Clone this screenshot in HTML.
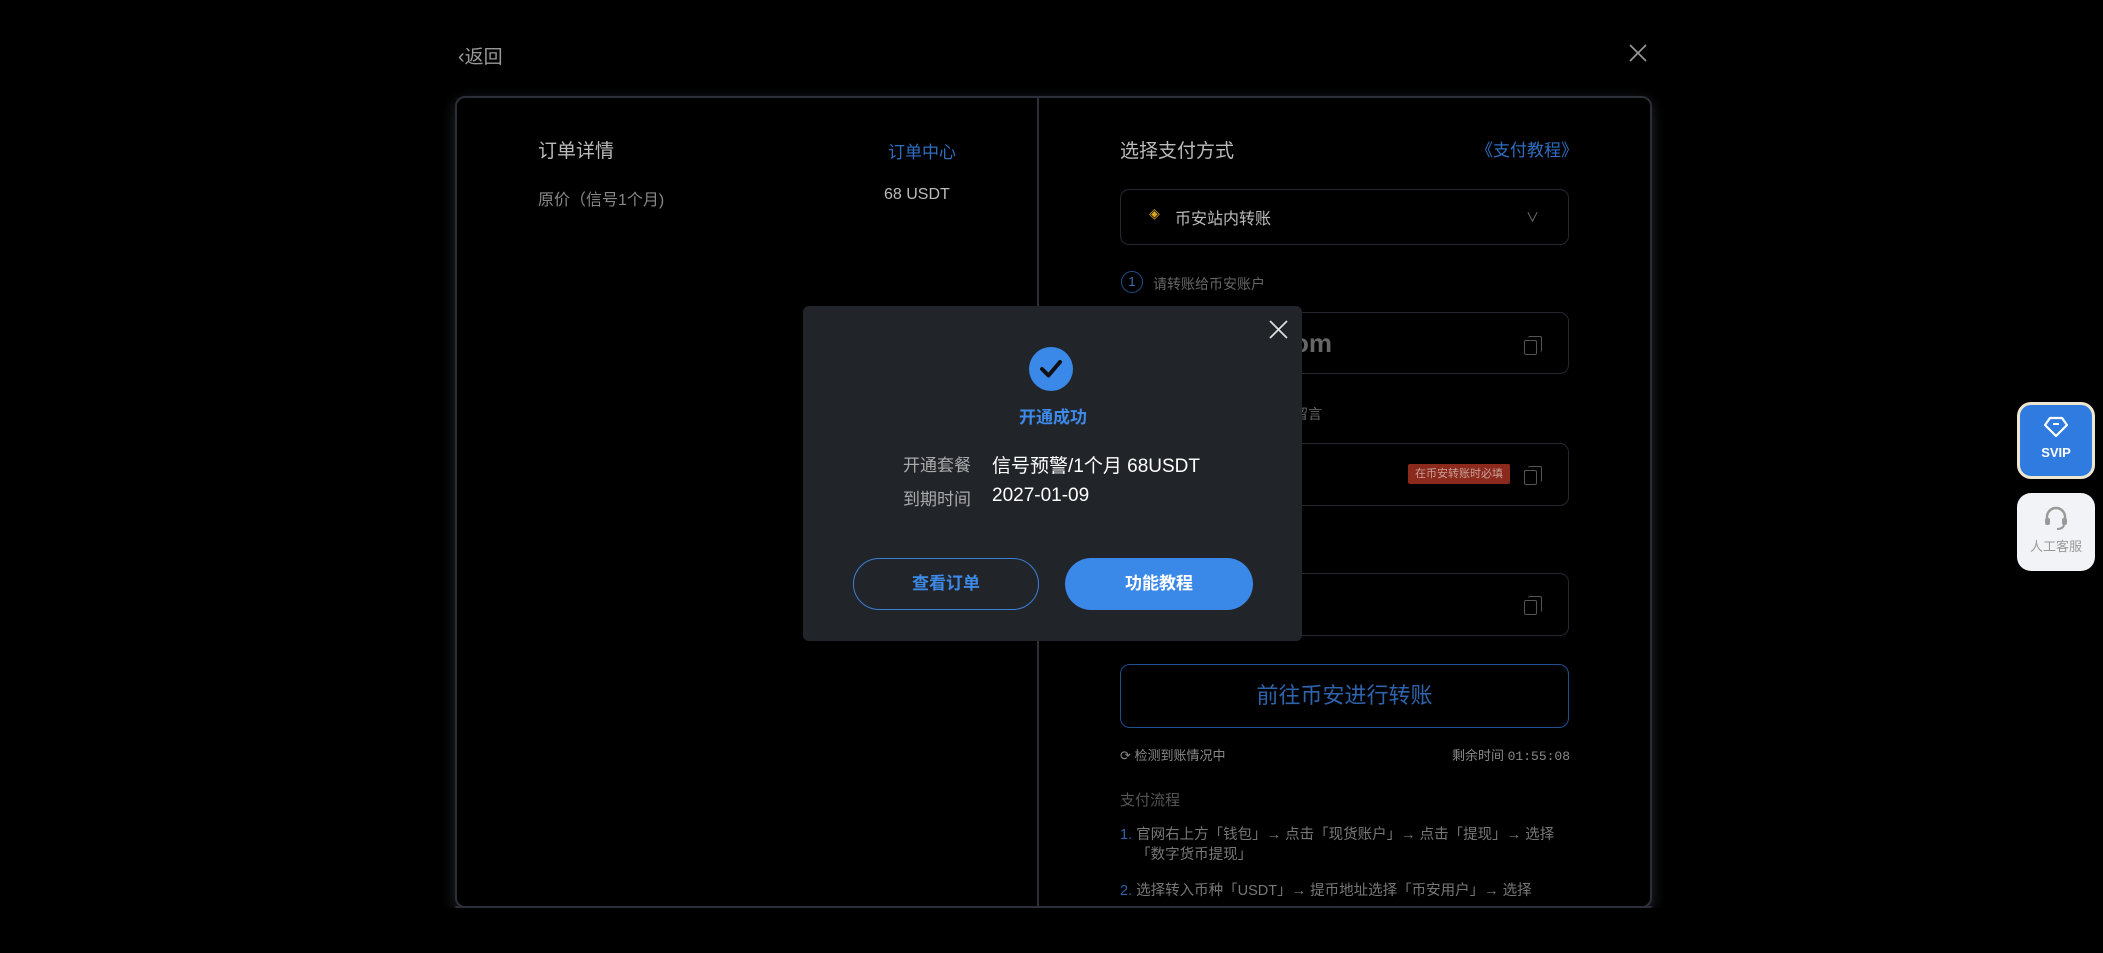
<!DOCTYPE html>
<html><head><meta charset="utf-8"><style>
*{margin:0;padding:0;box-sizing:border-box}
body{width:2103px;height:953px;background:#000;overflow:hidden;position:relative;font-family:"Liberation Sans","Noto Sans CJK SC",sans-serif;color:#ddd}
.a{position:absolute;white-space:nowrap}
.card{position:absolute;left:455px;top:96px;width:1197px;height:812px;border:2px solid #2c2f37;border-radius:10px;background:#000;box-shadow:0 4px 14px #23262e;overflow:hidden}
.box{position:absolute;left:1120px;width:449px;border:1.5px solid #24272d;border-radius:9px}
.copy{position:absolute;width:13px;height:15px;border:1.5px solid #555;border-radius:2px}
.copy:before{content:"";position:absolute;left:3px;top:-5px;width:13px;height:15px;border:1.5px solid #555;border-left:none;border-bottom:none;border-radius:2px}
</style></head><body>
<div class="a" style="left:458px;top:42px;font-size:19px;color:#999"><span style="font-size:20px">‹</span>返回</div>
<svg class="a" style="left:1628px;top:43px" width="20" height="20"><path d="M2 2L18 18M18 2L2 18" stroke="#999" stroke-width="1.6"/></svg>
<div class="card"></div>
<div class="a" style="left:1037px;top:98px;width:1.5px;height:808px;background:#2c2f37"></div>
<div class="a" style="left:538px;top:136px;font-size:19px;color:#bbb">订单详情</div>
<div class="a" style="left:888px;top:138px;font-size:17px;color:#2f6ec0">订单中心</div>
<div class="a" style="left:538px;top:186px;font-size:16px;color:#888">原价（信号1个月)</div>
<div class="a" style="left:884px;top:186px;font-size:16px;color:#bbb">68 USDT</div>
<div class="a" style="left:1120px;top:136px;font-size:19px;color:#bbb">选择支付方式</div>
<div class="a" style="left:1476px;top:136px;font-size:17px;color:#2f6ec0">《支付教程》</div>
<div class="box" style="top:189px;height:56px"></div>
<div class="a" style="left:1149px;top:205px;color:#d8a520;font-size:14px">◈</div>
<div class="a" style="left:1175px;top:205px;font-size:16px;color:#bbb">币安站内转账</div>
<div class="a" style="left:1526px;top:207px;font-size:13px;color:#777">∨</div>
<div class="a" style="left:1121px;top:271px;width:22px;height:22px;border:1.5px solid #1f4f8e;border-radius:50%;font-size:13px;color:#3a6fb8;text-align:center;line-height:19px">1</div>
<div class="a" style="left:1153px;top:274px;font-size:14px;color:#666">请转账给币安账户</div>
<div class="box" style="top:312px;height:62px"></div>
<div class="a" style="left:1032px;top:328px;width:300px;text-align:right;font-size:26px;font-weight:bold;color:#666">support@binance.com</div>
<div class="copy" style="left:1524px;top:340px"></div>
<div class="a" style="left:1022px;top:404px;width:300px;text-align:right;font-size:14px;color:#666">请在转账时填写以下留言</div>
<div class="box" style="top:443px;height:63px"></div>
<div class="a" style="left:1408px;top:464px;width:102px;height:20px;background:#8b2a1c;border-radius:2px;font-size:11px;color:#c9a09a;text-align:center;line-height:20px">在币安转账时必填</div>
<div class="copy" style="left:1524px;top:470px"></div>
<div class="box" style="top:573px;height:63px"></div>
<div class="copy" style="left:1524px;top:600px"></div>
<div class="a" style="left:1120px;top:664px;width:449px;height:64px;border:1.5px solid #1f4f92;border-radius:10px;font-size:22px;color:#2f64ad;text-align:center;line-height:61px">前往币安进行转账</div>
<div class="a" style="left:1120px;top:745px;font-size:13px;color:#888">⟳ 检测到账情况中</div>
<div class="a" style="left:1452px;top:745px;font-size:13px;color:#888">剩余时间 <span style="font-family:'Liberation Mono',monospace">01:55:08</span></div>
<div class="a" style="left:1120px;top:789px;font-size:15px;color:#555">支付流程</div>
<div class="a" style="left:1120px;top:825px;font-size:14.5px;color:#777;line-height:20px"><span style="color:#2f64ad">1.</span> 官网右上方「钱包」→ 点击「现货账户」→ 点击「提现」→ 选择<br>&nbsp;&nbsp;&nbsp;&nbsp;「数字货币提现」</div>
<div class="a" style="left:1120px;top:881px;font-size:14.5px;color:#777;line-height:20px"><span style="color:#2f64ad">2.</span> 选择转入币种「USDT」→ 提币地址选择「币安用户」→ 选择</div>
<div class="a" style="left:0;top:908px;width:2103px;height:45px;background:#000"></div>
<div class="a" style="left:455px;top:906px;width:1197px;height:2px;background:#2c2f37;border-radius:0 0 10px 10px"></div>

<div class="a" style="left:803px;top:306px;width:499px;height:335px;background:#212429;border-radius:6px"></div>
<svg class="a" style="left:1269px;top:320px" width="19" height="19"><path d="M1 1L18 18M18 1L1 18" stroke="#ddd" stroke-width="1.8"/></svg>
<svg class="a" style="left:1029px;top:347px" width="44" height="44"><circle cx="22" cy="22" r="22" fill="#3a88e8"/><path d="M13 22L19.5 28.5L31 15" stroke="#111" stroke-width="4" fill="none" stroke-linecap="round" stroke-linejoin="round"/></svg>
<div class="a" style="left:953px;top:403px;width:200px;text-align:center;font-size:17px;font-weight:bold;color:#3d8ae8">开通成功</div>
<div class="a" style="left:871px;top:451px;width:100px;text-align:right;font-size:17px;color:#aaa">开通套餐</div>
<div class="a" style="left:992px;top:451px;font-size:19px;color:#fff">信号预警/1个月 68USDT</div>
<div class="a" style="left:871px;top:485px;width:100px;text-align:right;font-size:17px;color:#aaa">到期时间</div>
<div class="a" style="left:992px;top:485px;font-size:19px;color:#fff">2027-01-09</div>
<div class="a" style="left:853px;top:558px;width:186px;height:52px;border:1.5px solid #3a80d8;border-radius:26px;text-align:center;line-height:49px;font-size:17px;font-weight:bold;color:#3d8ae8">查看订单</div>
<div class="a" style="left:1065px;top:558px;width:188px;height:52px;background:#3a88e8;border-radius:26px;text-align:center;line-height:52px;font-size:17px;font-weight:bold;color:#fff">功能教程</div>

<div class="a" style="left:2017px;top:402px;width:78px;height:77px;background:#2f7be0;border:3px solid #efe6cf;border-radius:14px;text-align:center;color:#fff;font-size:13px;font-weight:bold">
<svg style="margin-top:11px" width="26" height="22"><path d="M7 2H19L24 9L13 20L2 9Z" fill="none" stroke="#fff" stroke-width="2.2" stroke-linejoin="round"/><path d="M10 8H16" stroke="#fff" stroke-width="2"/></svg><div style="margin-top:4px">SVIP</div></div>
<div class="a" style="left:2017px;top:493px;width:78px;height:78px;background:#f2f3f6;border-radius:14px;text-align:center;color:#999;font-size:13px">
<svg style="margin-top:12px" width="26" height="26"><path d="M4 15V12A9 9 0 0 1 22 12V15" fill="none" stroke="#999" stroke-width="2.4"/><rect x="2" y="13" width="5" height="7" rx="2" fill="#999"/><rect x="19" y="13" width="5" height="7" rx="2" fill="#999"/><path d="M21 20Q20 24 14 24" fill="none" stroke="#999" stroke-width="2"/></svg><div style="margin-top:2px">人工客服</div></div>
</body></html>
